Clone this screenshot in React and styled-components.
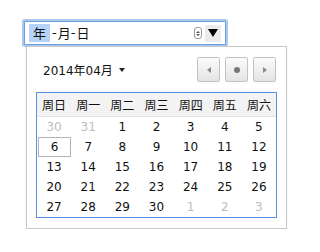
import React from "react";
import styled, { createGlobalStyle } from "styled-components";

const Global = createGlobalStyle`
  html, body { margin: 0; padding: 0; background: #fff; }
  body { font-family: "DejaVu Sans", "Noto Sans CJK SC", sans-serif; color: #111; }
`;

const Page = styled.div`
  padding: 21px 0 0 24px;
`;

const Field = styled.div`
  box-sizing: border-box;
  width: 202px;
  height: 24px;
  display: flex;
  align-items: center;
  border: 1px solid #6d9fdc;
  box-shadow: 0 0 0 2px #a9c8ee;
  border-radius: 1px;
  padding: 0 4px 0 4px;
  font-size: 13px;
  background: #fff;
`;

const Segment = styled.span`
  padding: ${(p) => (p.$active ? "1px 4px 1px 4px" : "1px 0")};
  margin-right: ${(p) => (p.$active ? "2px" : "0")};
  background: ${(p) => (p.$active ? "#b5d3f7" : "transparent")};
  line-height: 16px;
  font-family: "Noto Sans CJK SC", sans-serif;
`;

const Sep = styled.span`
  padding: 0 1px 0 0;
  line-height: 16px;
`;

const Spacer = styled.div`
  flex: 1;
`;

const Spin = styled.div`
  box-sizing: border-box;
  width: 8px;
  height: 12px;
  border: 1px solid #999;
  border-radius: 3px;
  display: flex;
  flex-direction: column;
  align-items: center;
  justify-content: center;
  gap: 1px;
  margin-right: 3px;
`;

const Tri = styled.div`
  width: 0;
  height: 0;
  border-left: ${(p) => p.$w}px solid transparent;
  border-right: ${(p) => p.$w}px solid transparent;
  ${(p) => (p.$up ? "border-bottom" : "border-top")}: ${(p) => p.$h}px solid ${(p) => p.$c};
`;

const DropBtn = styled.div`
  width: 16px;
  height: 17px;
  background: #ececec;
  display: flex;
  align-items: center;
  justify-content: center;
`;

const Popup = styled.div`
  box-sizing: border-box;
  margin: 1px 0 0 2px;
  width: 261px;
  height: 183px;
  border: 1px solid #c9c9c9;
  box-shadow: 0 1px 2px rgba(0, 0, 0, 0.08);
  background: #fff;
  padding: 10px 10px 0 9px;
`;

const Header = styled.div`
  display: flex;
  align-items: center;
  height: 25px;
  margin-bottom: 10px;
`;

const MonthLabel = styled.div`
  display: flex;
  align-items: center;
  gap: 6px;
  padding-left: 7px;
  font-size: 12px;
  color: #111;
  font-family: "DejaVu Sans", "Noto Sans CJK SC", sans-serif;
`;

const NavGroup = styled.div`
  margin-left: auto;
  display: flex;
  gap: 5px;
`;

const NavButton = styled.div`
  box-sizing: border-box;
  width: 23px;
  height: 25px;
  border: 1px solid #c2c2c2;
  border-radius: 2px;
  background: linear-gradient(#fbfbfb, #e4e4e4);
  display: flex;
  align-items: center;
  justify-content: center;
`;

const SideTri = styled.div`
  width: 0;
  height: 0;
  border-top: 3px solid transparent;
  border-bottom: 3px solid transparent;
  ${(p) => (p.$left ? "border-right" : "border-left")}: 4px solid #8a8a8a;
`;

const Dot = styled.div`
  width: 6px;
  height: 6px;
  border-radius: 50%;
  background: #777;
`;

const Table = styled.div`
  box-sizing: border-box;
  width: 241px;
  border: 1px solid #5a8fe6;
  display: grid;
  grid-template-columns: repeat(7, 1fr);
`;

const HeadCell = styled.div`
  height: 23px;
  background: #f3f3f3;
  border-bottom: 1px solid #e2e2e2;
  display: flex;
  align-items: center;
  justify-content: center;
  font-size: 12px;
  color: #111;
  font-family: "Noto Sans CJK SC", sans-serif;
`;

const DayCell = styled.div`
  box-sizing: border-box;
  height: 20px;
  display: flex;
  align-items: center;
  justify-content: center;
  font-size: 12px;
  color: ${(p) => (p.$muted ? "#bdbdbd" : "#111")};
  border: 1px solid ${(p) => (p.$selected ? "#b3b3b3" : "transparent")};
  margin: ${(p) => (p.$selected ? "0 0 0 1px" : "0")};
`;

const weekdays = ["周日", "周一", "周二", "周三", "周四", "周五", "周六"];

const days = [
  ...[30, 31].map((d) => ({ d, muted: true })),
  ...Array.from({ length: 30 }, (_, i) => ({ d: i + 1 })),
  ...[1, 2, 3].map((d) => ({ d, muted: true })),
];

export default function App() {
  return (
    <>
      <Global />
      <Page>
        <Field>
          <Segment $active>年</Segment>
          <Sep>-</Sep>
          <Segment>月</Segment>
          <Sep>-</Sep>
          <Segment>日</Segment>
          <Spacer />
          <Spin>
            <Tri $up $w={2} $h={2} $c="#555" />
            <Tri $w={2} $h={2} $c="#555" />
          </Spin>
          <DropBtn>
            <Tri $w={5} $h={8} $c="#000" />
          </DropBtn>
        </Field>
        <Popup>
          <Header>
            <MonthLabel>
              <span>2014年04月</span>
              <Tri $w={3} $h={4} $c="#222" />
            </MonthLabel>
            <NavGroup>
              <NavButton>
                <SideTri $left />
              </NavButton>
              <NavButton>
                <Dot />
              </NavButton>
              <NavButton>
                <SideTri />
              </NavButton>
            </NavGroup>
          </Header>
          <Table>
            {weekdays.map((w) => (
              <HeadCell key={w}>{w}</HeadCell>
            ))}
            {days.map((x, i) => (
              <DayCell key={i} $muted={x.muted} $selected={!x.muted && x.d === 6}>
                {x.d}
              </DayCell>
            ))}
          </Table>
        </Popup>
      </Page>
    </>
  );
}
